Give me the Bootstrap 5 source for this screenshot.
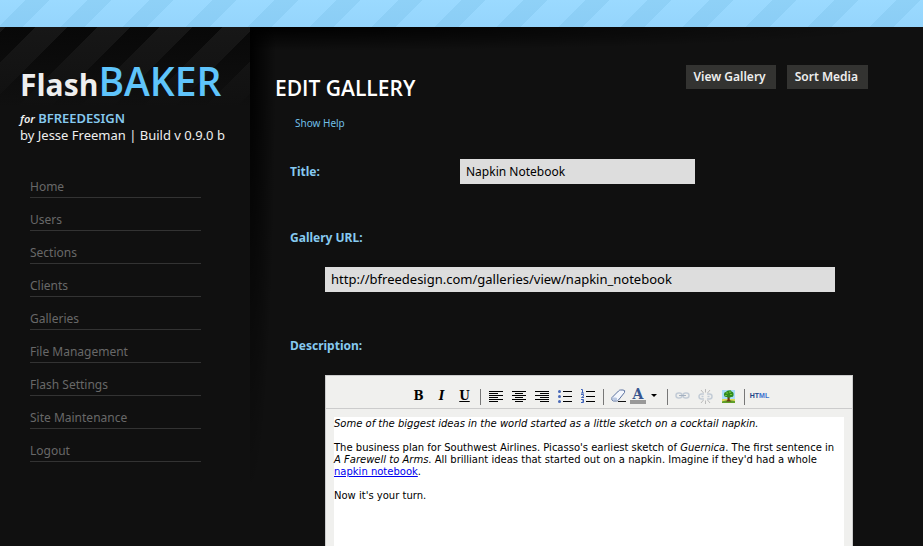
<!DOCTYPE html>
<html lang="en">
<head>
<meta charset="utf-8">
<meta name="viewport" content="width=device-width, initial-scale=1">
<title>FlashBAKER – Edit Gallery</title>
<link href="https://cdn.jsdelivr.net/npm/bootstrap@5.3.0/dist/css/bootstrap.min.css" rel="stylesheet">
<style>
  :root { --ink: #101010; --sky: #86c9ef; }
  body { background: var(--ink); color: #fff; font: 13px/16px "Noto Sans", "Open Sans", sans-serif; }
  a { text-decoration: none; }
  .stripe-bar { height: 27px; background: linear-gradient(transparent, rgba(110,180,235,.14)), repeating-linear-gradient(135deg, #9bdaff 0 18px, #8fd1f7 18px 35px, #9bdaff 35px 44px); }
  .shell { min-height: calc(100vh - 27px); }
  .side { width: 250px; padding: 32px 20px; background: linear-gradient(rgba(16,16,16,0), var(--ink) 80px), repeating-linear-gradient(135deg, #171717 0 4px, #080808 4px 25px, #171717 25px 44px); }
  .brand { font: 700 30px/44px "Open Sans", sans-serif; color: #eee; margin: 0; }
  .brand span { font-weight: 600; font-size: 39px; color: #5fc4fb; }
  .owner { margin-top: 3px; white-space: nowrap; color: #eee; }
  .owner em { font-size: 11px; font-weight: 600; }
  .owner b { font-weight: 600; color: var(--sky); }
  .menu { margin: 22px 29px 0 10px; }
  .menu .nav-link { height: 33px; padding: 14px 0 0; border-bottom: 1px solid #333; color: #686868; font-size: 12px; line-height: 16px; }
  .menu .nav-link:hover { color: #bbb; }
  .main-pane { min-width: 0; padding: 38px 55px 0 25px; background: radial-gradient(ellipse 26px 470px at 0 0, #000, transparent) no-repeat, radial-gradient(ellipse 640px 24px at 0 0, #000, transparent) no-repeat; }
  .page-title { font: 600 21px/24px "Open Sans", sans-serif; margin: 11px 0 0; }
  .tool-btns { gap: 11px; }
  .tool-btn { background: #333331; color: #eee; border: 0; height: 24px; padding: 0 10px 0 8px; font-size: 12px; font-weight: 600; line-height: 24px; }
  .help-link { color: #70bfe6; font-size: 10px; margin: 15px 0 0 20px; align-self: flex-start; }
  .fields { margin-top: 28px; padding-left: 15px; }
  .field-label { color: var(--sky); font-weight: 700; font-size: 12px; line-height: 16px; }
  .side-label { width: 170px; }
  .block-label { margin: 46px 0 21px; }
  .field-box { background: #ddd; border: 0; border-radius: 0; height: 25px; padding: 0 6px; color: #000; line-height: 25px; }
  .short-box { width: 235px; font-size: 12px; }
  .long-box { width: 100%; max-width: 510px; font-size: 13px; }
  .indent { margin-left: 35px; }
  .editor { max-width: 528px; background: #f0f0ee; border: 1px solid #ccc; border-bottom: 0; }
  .bar { height: 33px; border-bottom: 1px solid #ccc; padding-top: 8px; }
  .bar button { border: 0; background: none; padding: 0; width: 23px; height: 24px; color: #000; font: 700 12px/24px "DejaVu Serif", serif; }
  .bar button.wide { width: 33px; }
  .bar button.source { font: 700 7px/24px "Liberation Sans", sans-serif; color: #1f4688; }
  .source span { color: #3b72ce; }
  .bar i { width: 1px; height: 16px; background: #777; margin: 5px 3px 0 4px; }
  .bar svg { display: block; margin: auto; }
  .ink-letter { font: 700 14px/12px "DejaVu Serif", serif; color: #39568f; width: 16px; border-bottom: 4px solid #999; }
  .paper { margin: 8px 8px 0; padding-top: 1px; background: #fff; color: #000; font: 10px/12px "DejaVu Sans", sans-serif; outline: 0; }
  .paper p { margin: 0 0 12px; }
  .paper a { color: #00e; text-decoration: underline; }
</style>
<script src="https://cdn.jsdelivr.net/npm/bootstrap@5.3.0/dist/js/bootstrap.bundle.min.js"></script>
</head>
<body>
<header class="stripe-bar"></header>
<div class="shell d-flex">
  <aside class="side flex-shrink-0">
    <h1 class="brand">Flash<span>BAKER</span></h1>
    <div class="owner"><em>for</em> <b>BFREEDESIGN</b><br>by Jesse Freeman | Build v 0.9.0 b</div>
    <nav class="menu nav flex-column">
      <a class="nav-link" href="#">Home</a>
      <a class="nav-link" href="#">Users</a>
      <a class="nav-link" href="#">Sections</a>
      <a class="nav-link" href="#">Clients</a>
      <a class="nav-link" href="#">Galleries</a>
      <a class="nav-link" href="#">File Management</a>
      <a class="nav-link" href="#">Flash Settings</a>
      <a class="nav-link" href="#">Site Maintenance</a>
      <a class="nav-link" href="#">Logout</a>
    </nav>
  </aside>
  <main class="main-pane flex-grow-1 d-flex flex-column">
    <div class="d-flex justify-content-between align-items-start">
      <h2 class="page-title">EDIT GALLERY</h2>
      <div class="tool-btns d-flex">
        <button type="button" class="tool-btn">View Gallery</button>
        <button type="button" class="tool-btn">Sort Media</button>
      </div>
    </div>
    <a class="help-link" href="#">Show Help</a>
    <form class="fields d-flex flex-column flex-grow-1">
      <div class="d-flex align-items-center">
        <label class="field-label side-label" for="title">Title:</label>
        <input class="field-box short-box" id="title" type="text" value="Napkin Notebook">
      </div>
      <label class="field-label block-label" for="url">Gallery URL:</label>
      <div class="indent"><input class="field-box long-box d-block" id="url" type="text" value="http://bfreedesign.com/galleries/view/napkin_notebook"></div>
      <div class="field-label block-label" id="desc">Description:</div>
      <div class="editor indent d-flex flex-column flex-grow-1">
        <div class="bar d-flex justify-content-center" role="toolbar" aria-label="Formatting">
          <button type="button" aria-label="Bold">B</button>
          <button type="button" class="fst-italic" aria-label="Italic">I</button>
          <button type="button" class="text-decoration-underline" aria-label="Underline">U</button>
          <i></i>
          <button type="button" aria-label="Align left"><svg width="14" height="11" viewBox="0 0 14 11"><path d="M0 0h14v1H0zM0 2h9v1H0zM0 4h14v1H0zM0 6h9v1H0zM0 8h14v1H0zM0 10h9v1H0z"/></svg></button>
          <button type="button" aria-label="Align center"><svg width="14" height="11" viewBox="0 0 14 11"><path d="M0 0h14v1H0zM3 2h8v1H3zM0 4h14v1H0zM3 6h8v1H3zM0 8h14v1H0zM3 10h8v1H3z"/></svg></button>
          <button type="button" aria-label="Align right"><svg width="14" height="11" viewBox="0 0 14 11"><path d="M0 0h14v1H0zM5 2h9v1H5zM0 4h14v1H0zM5 6h9v1H5zM0 8h14v1H0zM5 10h9v1H5z"/></svg></button>
          <button type="button" aria-label="Bulleted list"><svg width="14" height="13" viewBox="0 0 14 13"><path d="M5 1h9v1H5zM5 6h9v1H5zM5 11h9v1H5z"/><g fill="#4868b8"><circle cx="1.500" cy="1.500" r="1.500"/><circle cx="1.500" cy="6.500" r="1.500"/><circle cx="1.500" cy="11.500" r="1.500"/></g></svg></button>
          <button type="button" aria-label="Numbered list"><svg width="14" height="14" viewBox="0 0 14 14"><path d="M5 2h9v1H5zM5 7h9v1H5zM5 12h9v1H5z"/><path fill="none" stroke="#3f62b8" d="M0 .5h1.500V4M0 4h3M0 5.500h2.500v1.700L.5 8.500H3M0 10.500h2.500v3H0M1 12h1.500"/></svg></button>
          <i></i>
          <button type="button" aria-label="Remove formatting"><svg width="15" height="14" viewBox="0 0 15 14"><path fill="#f4f7fd" stroke="#5a719f" d="M1 8.500 7.500 2Q8.300 1 9.500 1H12q2.500 0 1.500 2.500L7.500 11q-.8 1-2 1H2.500Q0 11.500 1 8.500z"/><path fill="#b9c8e2" d="M1.500 8.500H5q1.500 0 1 2.500H3q-2 0-1.500-2.500z"/><path stroke="#111" d="M7 12.500h8"/></svg></button>
          <button type="button" class="wide d-flex align-items-center" aria-label="Text colour"><span class="ink-letter">A</span><svg width="7" height="4" viewBox="0 0 7 4"><path d="M0 0h6L3 3z"/></svg></button>
          <i></i>
          <button type="button" aria-label="Insert link" disabled><svg width="15" height="8" viewBox="0 0 15 8"><g fill="none" stroke="#c3ccd6" stroke-width="1.500"><rect x="1" y="1" width="6" height="5" rx="2.500"/><rect x="8" y="1" width="6" height="5" rx="2.500"/></g><path stroke="#a4b0bf" d="M4 3.500h7"/></svg></button>
          <button type="button" aria-label="Remove link" disabled><svg width="15" height="15" viewBox="0 0 15 15"><g fill="none" stroke="#c3ccd6" stroke-width="1.500"><path d="M6 5H3.500a2.500 2.500 0 0 0 0 5H6M9 5h2.500a2.500 2.500 0 0 1 0 5H9M3.500 7.500h2M9.500 7.500h2"/></g><path fill="none" stroke="#bcbcbc" d="M7.500 0v3.500M3 1l2.500 3M12 1 9.500 4M7.500 15v-3.500M3 14l2.500-3M12 14l-2.500-3"/></svg></button>
          <button type="button" aria-label="Insert image"><svg width="13" height="13" viewBox="0 0 13 13"><path fill="#a9dcf8" d="M0 0h13v9H0z"/><path fill="#e3d95a" d="M0 9h13v4H0z"/><path fill="#5f9f2a" d="M0 11.500q6-2 13-.5v2H0z"/><path fill="#6c3c12" d="M5.500 6h2l.3 4 1.700 1.500H4L5.500 10z"/><path fill="#2f8a1e" d="M2 4q0-2 2-2 1-2 3-1.500Q9-.2 9.500 1.500 12 2 11.500 4.500 12 7 9 7 7 8.500 5 7 1.500 7.500 2 4z"/><path fill="#79c53a" d="M4 2.500h2v1H4zM7 1.500h2v1.200H7zM3 5h2v1H3zM8 4h2v1H8z"/></svg></button>
          <i></i>
          <button type="button" class="source" aria-label="Edit HTML source">HT<span>ML</span></button>
        </div>
        <div class="paper flex-grow-1" contenteditable="true" role="textbox" aria-multiline="true" aria-labelledby="desc" spellcheck="false">
          <p><em>Some of the biggest ideas in the world started as a little sketch on a cocktail napkin.</em></p>
          <p>The business plan for Southwest Airlines. Picasso's earliest sketch of <em>Guernica</em>. The first sentence in <em>A Farewell to Arms</em>. All brilliant ideas that started out on a napkin. Imagine if they'd had a whole <a href="#">napkin notebook</a>.</p>
          <p>Now it's your turn.</p>
        </div>
      </div>
    </form>
  </main>
</div>
</body>
</html>
